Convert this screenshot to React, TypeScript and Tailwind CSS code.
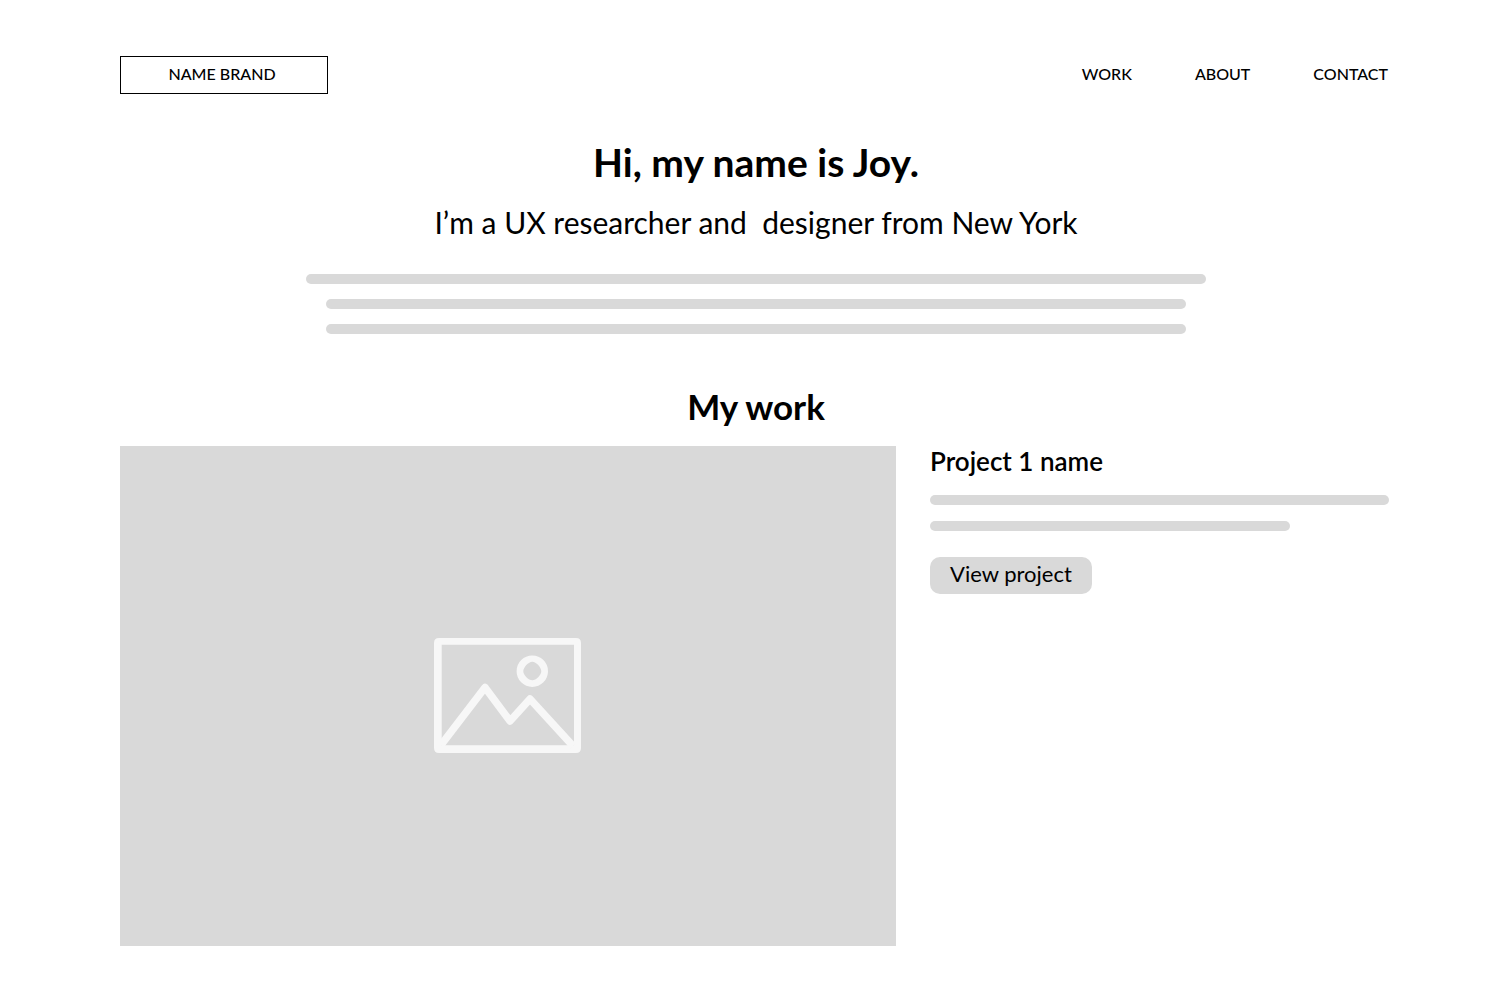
const navLinks = ["WORK", "ABOUT", "CONTACT"];

function Bar({ className }: { className: string }) {
  return <div className={`h-2.5 rounded-full bg-[#d9d9d9] ${className}`} />;
}

function ImageIcon() {
  return (
    <svg width="148" height="116" viewBox="0 0 148 116" fill="none" stroke="#f7f7f7" aria-hidden="true">
      <path
        fill="#f7f7f7"
        stroke="none"
        fillRule="evenodd"
        d="M5 0H142Q147 0 147 5V110Q147 115 142 115H5Q0 115 0 110V5Q0 0 5 0ZM7.700 6.700V107.300H140V6.700Z"
      />
      <path d="M7 107L51 49.500L76 83L96 61L139 108" strokeWidth="7.5" strokeLinejoin="round" />
      <path
        fill="#f7f7f7"
        stroke="none"
        fillRule="evenodd"
        d="M98.300 17.500A15.700 15.700 0 1 1 98.300 48.900A15.700 15.700 0 1 1 98.300 17.500ZM98.300 23.700C94.500 23.700 89.300 29.500 89.300 33.200C89.300 37 94.500 42.300 98.300 42.300C102.100 42.300 107.300 37 107.300 33.200C107.300 29.500 102.100 23.700 98.300 23.700Z"
      />
    </svg>
  );
}

export default function App() {
  return (
    <div className="min-h-screen bg-white px-[120px] pt-14 pb-9 font-['Lato',sans-serif] text-black">
      <header className="flex items-center justify-between pr-1">
        <a
          href="#home"
          className="flex h-[38px] w-52 items-center justify-center border border-black pr-1 pb-0.5 text-base leading-5 font-medium"
        >
          NAME BRAND
        </a>
        <nav className="flex gap-[63px] pb-0.5 text-base leading-5 font-medium">
          {navLinks.map((label) => (
            <a key={label} href={`#${label.toLowerCase()}`}>
              {label}
            </a>
          ))}
        </nav>
      </header>

      <main>
        <section className="flex flex-col items-center pt-12 text-center">
          <h1 className="text-[39px] leading-10 font-bold">Hi, my name is Joy.</h1>
          <p className="mt-5 text-[30px] leading-10 whitespace-pre-wrap">
            {"I’m a UX researcher and  designer from New York"}
          </p>
          <div className="mt-8 flex w-full max-w-[900px] flex-col items-center gap-[15px]">
            <Bar className="w-full" />
            <Bar className="w-full max-w-[860px]" />
            <Bar className="w-full max-w-[860px]" />
          </div>
        </section>

        <section id="work" className="pt-[52px]">
          <h2 className="text-center text-[35px] leading-10 font-bold">My work</h2>
          <article className="mt-5 grid grid-cols-[776fr_459fr] gap-[34px] pr-[3px]">
            <div className="flex h-[500px] items-center justify-center bg-[#d9d9d9]">
              <ImageIcon />
            </div>
            <div className="flex flex-col items-start">
              <h3 className="text-[26px] leading-[30px] font-semibold">Project 1 name</h3>
              <Bar className="mt-[19px] w-full" />
              <Bar className="mt-4 w-full max-w-[360px]" />
              <button
                type="button"
                className="mt-[26px] h-[37px] rounded-[10px] bg-[#d9d9d9] px-5 pb-1 text-[22px] leading-6"
              >
                View project
              </button>
            </div>
          </article>
        </section>
      </main>
    </div>
  );
}
